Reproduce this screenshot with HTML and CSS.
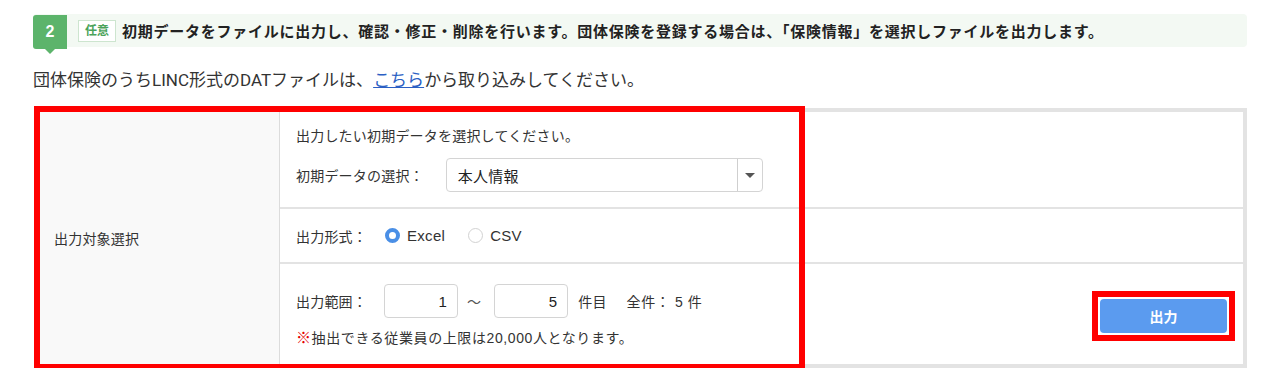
FILE: index.html
```html
<!DOCTYPE html>
<html lang="ja">
<head>
  <meta charset="UTF-8">
  <title>初期データ出力</title>
  <meta name="viewport" content="width=device-width, initial-scale=1.0">
  <link rel="stylesheet" href="styles.css">
</head>
<body>
  <div class="page">
    <div class="step">
      <div class="step-num">2</div>
      <span class="tag">任意</span>
      <span class="step-text">初期データをファイルに出力し、確認・修正・削除を行います。団体保険を登録する場合は、「保険情報」を選択しファイルを出力します。</span>
    </div>

    <p class="intro">団体保険のうちLINC形式のDATファイルは、<a href="#">こちら</a>から取り込みしてください。</p>

    <div class="form-wrap">
      <div class="form-table">
        <div class="label-cell">出力対象選択</div>
        <div class="rows">
          <div class="row row-select">
            <div class="hint">出力したい初期データを選択してください。</div>
            <div class="field">
              <span class="field-label">初期データの選択：</span>
              <div class="select">
                <span class="select-value">本人情報</span>
                <span class="select-arrow"></span>
              </div>
            </div>
          </div>
          <div class="row row-format">
            <span class="field-label">出力形式：</span>
            <label class="radio"><span class="dot checked"></span>Excel</label>
            <label class="radio"><span class="dot"></span>CSV</label>
          </div>
          <div class="row row-range">
            <div class="range-col">
              <div class="field">
                <span class="field-label">出力範囲：</span>
                <span class="num-input">1</span>
                <span class="tilde">～</span>
                <span class="num-input">5</span>
                <span class="unit">件目</span>
                <span class="total">全件： 5 件</span>
              </div>
              <div class="note"><span class="mark">※</span>抽出できる従業員の上限は20,000人となります。</div>
            </div>
            <div class="btn-hl">
              <button class="btn">出力</button>
            </div>
          </div>
        </div>
      </div>
      <!-- annotation frame -->
      <div class="hl-box"></div>
    </div>
  </div>
</body>
</html>
```

FILE: styles.css
```css
body { margin: 0; background: #fff; color: #333; font-family: "Liberation Sans", Arial, "Noto Sans CJK JP", sans-serif; }
.page { padding: 14px 33px 0 33px; width: 1214px; }

.step { display: flex; align-items: center; height: 33px; background: #f3f9f3; border-radius: 4px; position: relative; }
.step-num { width: 34px; height: 34px; margin-top: 1px; align-self: flex-start; background: #5cb46b; color: #fff; font-weight: bold; font-size: 16px; display: flex; align-items: center; justify-content: center; border-radius: 3px 0 0 3px; position: relative; }
.step-num::after { content: ""; position: absolute; left: 12px; bottom: -5px; border-left: 5px solid transparent; border-right: 5px solid transparent; border-top: 5px solid #5cb46b; }
.tag { margin-left: 11px; height: 20px; padding: 0 6px; border: 1px solid #cde5cf; background: #fff; color: #4aa35a; font-weight: bold; font-size: 12px; line-height: 20px; }
.step-text { margin-left: 6px; font-size: 15px; font-weight: bold; color: #222; letter-spacing: 0.75px; }

.intro { margin: 22px 0 0 0; font-size: 17px; line-height: 22px; color: #333; font-family: Roboto, "Noto Sans CJK JP", sans-serif; }
.intro a { color: #2b5fc4; text-decoration: underline; }

.form-wrap { position: relative; margin-top: 17px; margin-left: 2px; }
.form-table { display: grid; grid-template-columns: 241px 1fr; border: 4px solid #e3e3e3; font-size: 14px; color: #333; letter-spacing: 0.2px; }
.label-cell { background: #f9f9f9; border-right: 1px solid #dcdcdc; display: flex; align-items: center; padding-left: 15px; }
.rows { display: flex; flex-direction: column; }
.row { padding: 0 16px; }
.row + .row { border-top: 2px solid #e3e3e3; }
.row-select { padding-top: 14px; padding-bottom: 15px; }
.hint { line-height: 20px; height: 20px; }
.field { display: flex; align-items: center; }
.row-select .field { margin-top: 12px; }
.field-label { white-space: nowrap; }

.select { margin-left: 22px; width: 315px; height: 32px; border: 1px solid #d4d4d4; border-radius: 4px; display: flex; align-items: center; }
.select-value { flex: 1; padding-left: 11px; font-size: 15px; color: #222; }
.select-arrow { width: 24px; height: 32px; border-left: 1px solid #cfcfcf; position: relative; }
.select-arrow::after { content: ""; position: absolute; left: 7px; top: 14px; border-left: 5px solid transparent; border-right: 5px solid transparent; border-top: 5px solid #555; }

.row-format { height: 53px; display: flex; align-items: center; }
.radio { display: flex; align-items: center; margin-left: 18px; font-size: 15px; color: #333; letter-spacing: 0.3px; }
.radio + .radio { margin-left: 23px; }
.dot { width: 15px; height: 15px; border: 1px solid #d2d2d2; border-radius: 50%; margin-right: 7px; box-sizing: border-box; }
.dot.checked { border: 4px solid #4a8fe6; background: #fff; }

.row-range { display: flex; align-items: center; justify-content: space-between; padding-top: 20px; padding-bottom: 16px; }
.num-input { width: 74px; height: 34px; margin-left: 17px; border: 1px solid #d4d4d4; border-radius: 4px; display: flex; align-items: center; justify-content: flex-end; padding-right: 10px; box-sizing: border-box; font-size: 15px; color: #222; }
.tilde { margin-left: 9px; color: #555; }
.tilde + .num-input { margin-left: 13px; }
.unit { margin-left: 10px; }
.total { margin-left: 20px; letter-spacing: 0.6px; }
.note { margin-top: 10px; line-height: 20px; font-size: 14px; letter-spacing: 0.6px; }
.mark { color: #e50000; font-size: 15px; }

.btn-hl { outline: 6px solid #ff0000; outline-offset: 2px; margin-top: -1px; }
.btn { display: block; width: 127px; height: 34px; background: #5b9bef; color: #fff; border: none; border-radius: 4px; font-weight: bold; font-size: 14px; font-family: "Noto Sans CJK JP", sans-serif; }

.hl-box { position: absolute; left: -1px; top: -2px; width: 771px; height: 264px; border: 6px solid #ff0000; box-sizing: border-box; }
```
